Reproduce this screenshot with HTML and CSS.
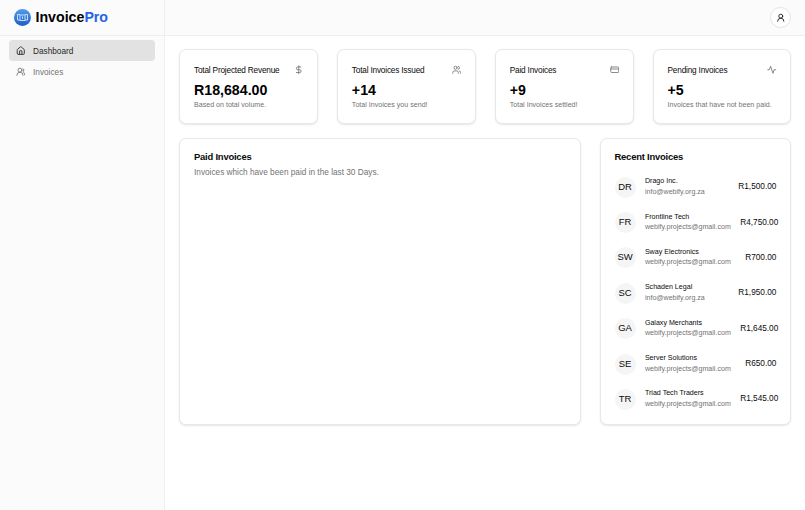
FILE: index.html
```html
<!DOCTYPE html>
<html lang="en">
<head>
<meta charset="utf-8">
<title>InvoicePro</title>
<link rel="stylesheet" href="styles.css">
</head>
<body>
<div class="app">
  <aside class="sidebar">
    <div class="brand">
      <svg class="logo" viewBox="0 0 34 34"><defs><linearGradient id="g" x1="0" y1="0" x2="0" y2="1"><stop offset="0" stop-color="#529ceb"/><stop offset="1" stop-color="#1d5cc9"/></linearGradient></defs><circle cx="17" cy="17" r="17" fill="url(#g)"/><g fill="none" stroke="#c4dcfa" stroke-width="2"><path d="M12 11H7v11h5M22 11h5v11h-5"/><rect x="12" y="12" width="10" height="11"/><path d="M17 15v5"/></g></svg>
      <span class="brand-name">Invoice<span class="accent">Pro</span></span>
    </div>
    <nav class="nav">
      <a class="nav-item active"><svg class="icon" viewBox="0 0 24 24"><path d="M15 21v-8a1 1 0 0 0-1-1h-4a1 1 0 0 0-1 1v8"/><path d="M3 10a2 2 0 0 1 .7-1.5l7-6a2 2 0 0 1 2.6 0l7 6A2 2 0 0 1 21 10v9a2 2 0 0 1-2 2H5a2 2 0 0 1-2-2z"/></svg><span>Dashboard</span></a>
      <a class="nav-item"><svg class="icon" viewBox="0 0 24 24"><path d="M18 21a8 8 0 0 0-16 0"/><circle cx="10" cy="8" r="5"/><path d="M22 20c0-3.370-2-6.500-4-8a5 5 0 0 0-.45-8.300"/></svg><span>Invoices</span></a>
    </nav>
  </aside>
  <div class="page">
    <header class="header"><button class="user" aria-label="Account"><svg class="icon" viewBox="0 0 24 24"><circle cx="12" cy="8" r="5"/><path d="M20 21a8 8 0 0 0-16 0"/></svg></button></header>
    <main class="main">
      <section class="stats">
        <article class="card stat"><div class="stat-head"><h3>Total Projected Revenue</h3><svg class="icon" viewBox="0 0 24 24"><path d="M12 2v20M17 5H9.500a3.500 3.500 0 0 0 0 7h5a3.500 3.500 0 0 1 0 7H6"/></svg></div><div class="value">R18,684.00</div><p class="note">Based on total volume.</p></article>
        <article class="card stat"><div class="stat-head"><h3>Total Invoices Issued</h3><svg class="icon" viewBox="0 0 24 24"><path d="M16 21v-2a4 4 0 0 0-4-4H6a4 4 0 0 0-4 4v2"/><circle cx="9" cy="7" r="4"/><path d="M22 21v-2a4 4 0 0 0-3-3.870M16 3.130a4 4 0 0 1 0 7.750"/></svg></div><div class="value">+14</div><p class="note">Total Invoices you send!</p></article>
        <article class="card stat"><div class="stat-head"><h3>Paid Invoices</h3><svg class="icon" viewBox="0 0 24 24"><rect x="2" y="5" width="20" height="14" rx="2"/><path d="M2 10h20"/></svg></div><div class="value">+9</div><p class="note">Total Invoices settled!</p></article>
        <article class="card stat"><div class="stat-head"><h3>Pending Invoices</h3><svg class="icon" viewBox="0 0 24 24"><path d="M22 12h-4l-3 9L9 3l-3 9H2"/></svg></div><div class="value">+5</div><p class="note">Invoices that have not been paid.</p></article>
      </section>
      <section class="panels">
        <article class="card chart"><h2>Paid Invoices</h2><p class="description">Invoices which have been paid in the last 30 Days.</p></article>
        <article class="card recent"><h2>Recent Invoices</h2>
          <ul class="list">
            <li><span class="avatar">DR</span><div class="who"><p class="name">Drago Inc.</p><p class="email">info@webify.org.za</p></div><span class="amount">R1,500.00</span></li>
            <li><span class="avatar">FR</span><div class="who"><p class="name">Frontline Tech</p><p class="email">webify.projects@gmail.com</p></div><span class="amount">R4,750.00</span></li>
            <li><span class="avatar">SW</span><div class="who"><p class="name">Sway Electronics</p><p class="email">webify.projects@gmail.com</p></div><span class="amount">R700.00</span></li>
            <li><span class="avatar">SC</span><div class="who"><p class="name">Schaden Legal</p><p class="email">info@webify.org.za</p></div><span class="amount">R1,950.00</span></li>
            <li><span class="avatar">GA</span><div class="who"><p class="name">Galaxy Merchants</p><p class="email">webify.projects@gmail.com</p></div><span class="amount">R1,645.00</span></li>
            <li><span class="avatar">SE</span><div class="who"><p class="name">Server Solutions</p><p class="email">webify.projects@gmail.com</p></div><span class="amount">R650.00</span></li>
            <li><span class="avatar">TR</span><div class="who"><p class="name">Triad Tech Traders</p><p class="email">webify.projects@gmail.com</p></div><span class="amount">R1,545.00</span></li>
          </ul>
        </article>
      </section>
    </main>
  </div>
</div>
</body>
</html>
```
FILE: styles.css
```css
* { box-sizing: border-box; margin: 0; padding: 0; }
body { font-family: "Liberation Sans", Arial, sans-serif; color: #0a0a0a; background: #fff; }
.app { display: grid; grid-template-columns: 165px minmax(0, 1fr); height: 510px; overflow: hidden; }
.sidebar { background: #fbfbfb; border-right: 1px solid #efefef; }
.brand { display: flex; align-items: center; gap: 4.5px; height: 36px; padding: 0 14px; border-bottom: 1px solid #efefef; }
.logo { width: 17px; height: 17px; }
.brand-name { margin-top: -1px; font-size: 14.2px; line-height: 20px; font-weight: 700; color: #000; }
.accent { color: #2563eb; }
.icon { display: block; flex: none; width: 9.5px; height: 9.5px; fill: none; stroke: currentColor; stroke-width: 2.2; stroke-linecap: round; stroke-linejoin: round; }
.nav { display: flex; flex-direction: column; padding: 4px 9px; }
.nav-item { display: flex; align-items: center; gap: 7.5px; height: 21.3px; padding: 0 7px; border-radius: 4px; font-size: 8.25px; color: #737373; }
.nav-item span { padding-top: 1px; }
.nav-item.active { background: #e2e2e2; color: #262626; }
.header { display: flex; align-items: center; justify-content: flex-end; height: 36px; padding-right: 14px; background: #fbfbfb; border-bottom: 1px solid #efefef; }
.user { display: flex; align-items: center; justify-content: center; width: 21px; height: 21px; border: 1px solid #e5e5e5; border-radius: 50%; background: #fff; color: #171717; }
.main { display: grid; grid-template-columns: minmax(0, 1fr); gap: 14px; padding: 13px 13.6px 0 14px; }
.stats { display: grid; grid-template-columns: repeat(4, minmax(0, 1fr)); gap: 19px; }
.card { min-width: 0; border: 1px solid #e8e8e8; border-radius: 7px; background: #fff; box-shadow: 0 1px 2px rgba(0, 0, 0, .1); }
.stat { height: 75px; padding: 13.5px 13.5px 13.5px 14px; }
.stat-head { display: flex; align-items: center; justify-content: space-between; height: 14px; color: #777; }
.stat-head .icon { margin-top: -1px; }
.stat-head h3 { margin-top: 1px; font-size: 8.25px; line-height: 12px; font-weight: 400; letter-spacing: -.19px; color: #0a0a0a; white-space: nowrap; }
.value { margin-top: 3px; font-size: 14.2px; line-height: 18px; font-weight: 700; color: #000; }
.note { margin-top: 1px; font-size: 7.1px; line-height: 10px; color: #737373; white-space: nowrap; }
.panels { display: grid; grid-template-columns: 402px minmax(0, 1fr); gap: 19px; }
.chart, .recent { height: 287px; padding: 12px 14px; }
h2 { font-size: 9.45px; line-height: 12px; font-weight: 700; letter-spacing: -.22px; }
.description { margin-top: 4px; font-size: 8.25px; line-height: 12px; color: #737373; }
.recent { padding-left: 13.5px; }
.list { display: grid; grid-template-columns: minmax(0, 1fr); gap: 14.35px; margin-top: 13.8px; list-style: none; }
.list li { display: flex; align-items: center; gap: 9.4px; height: 21px; }
.avatar { flex: none; width: 21px; height: 21px; border-radius: 50%; background: #f5f5f5; font-size: 9.45px; line-height: 20px; text-align: center; }
.who { flex: none; }
.name { font-size: 7.1px; line-height: 10.5px; white-space: nowrap; }
.email { font-size: 7.1px; line-height: 11.5px; color: #737373; white-space: nowrap; }
.amount { margin-left: auto; font-size: 8.25px; line-height: 12px; white-space: nowrap; }
```
